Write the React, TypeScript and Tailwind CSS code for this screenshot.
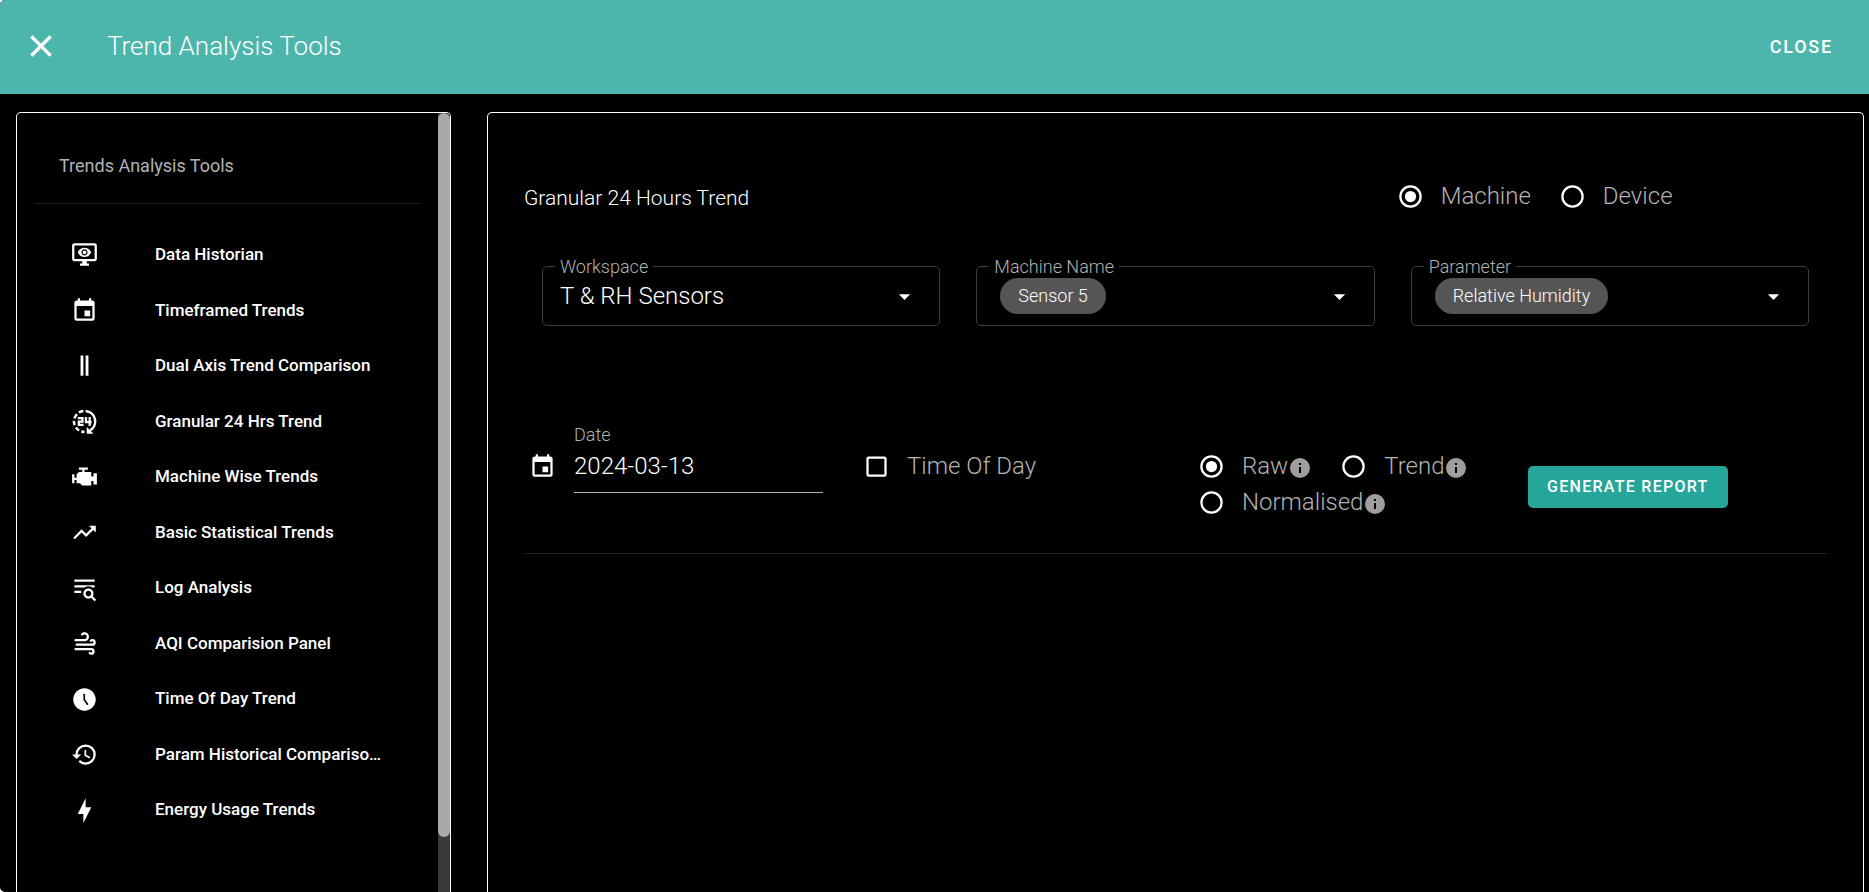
import { useState } from "react";
import type { ReactNode } from "react";

const CALENDAR =
  "M19,19H5V8H19M16,1V3H8V1H6V3H5C3.89,3 3,3.89 3,5V19A2,2 0 0,0 5,21H19A2,2 0 0,0 21,19V5C21,3.89 20.1,3 19,3H18V1M17,12H12V17H17V12Z";
const CLOSE =
  "M19,6.41L17.59,5L12,10.59L6.41,5L5,6.41L10.59,12L5,17.59L6.41,19L12,13.41L17.59,19L19,17.59L13.41,12L19,6.41Z";
const INFO =
  "M13,9H11V7H13M13,17H11V11H13M12,2A10,10 0 0,0 2,12A10,10 0 0,0 12,22A10,10 0 0,0 22,12A10,10 0 0,0 12,2Z";
const MONITOR_EYE =
  "M3 4V16H21V4H3M3 2H21C22.1 2 23 2.89 23 4V16C23 16.53 22.79 17.04 22.41 17.41C22.04 17.79 21.53 18 21 18H14V20H16V22H8V20H10V18H3C2.47 18 1.96 17.79 1.59 17.41C1.21 17.04 1 16.53 1 16V4C1 2.89 1.89 2 3 2M10.84 8.93C11.15 8.63 11.57 8.45 12 8.45C12.43 8.46 12.85 8.63 13.16 8.94C13.46 9.24 13.64 9.66 13.64 10.09C13.64 10.53 13.46 10.94 13.16 11.25C12.85 11.56 12.43 11.73 12 11.73C11.57 11.73 11.15 11.55 10.84 11.25C10.54 10.94 10.36 10.53 10.36 10.09C10.36 9.66 10.54 9.24 10.84 8.93M10.07 12C10.58 12.53 11.28 12.82 12 12.82C12.72 12.82 13.42 12.53 13.93 12C14.44 11.5 14.73 10.81 14.73 10.09C14.73 9.37 14.44 8.67 13.93 8.16C13.42 7.65 12.72 7.36 12 7.36C11.28 7.36 10.58 7.65 10.07 8.16C9.56 8.67 9.27 9.37 9.27 10.09C9.27 10.81 9.56 11.5 10.07 12M6 10.09C6.94 7.7 9.27 6 12 6C14.73 6 17.06 7.7 18 10.09C17.06 12.5 14.73 14.18 12 14.18C9.27 14.18 6.94 12.5 6 10.09Z";
const ENGINE =
  "M7,4V6H10V8H7L5,10V13H3V10H1V18H3V15H5V18H8L10,20H18V16H20V19H23V9H20V12H18V8H12V6H15V4H7Z";
const TRENDING_UP =
  "M16,6L18.29,8.29L13.41,13.17L9.41,9.17L2,16.59L3.41,18L9.41,12L13.41,16L19.71,9.71L22,12V6H16Z";
const TEXT_SEARCH =
  "M19.31 18.9L22.39 22L21 23.39L17.88 20.32C17.19 20.75 16.37 21 15.5 21C13 21 11 19 11 16.5C11 14 13 12 15.5 12C18 12 20 14 20 16.5C20 17.38 19.75 18.21 19.31 18.9M15.5 19C16.88 19 18 17.88 18 16.5C18 15.12 16.88 14 15.5 14C14.12 14 13 15.12 13 16.5C13 17.88 14.12 19 15.5 19M21 4V6H3V4H21M3 16V14H9V16H3M3 11V9H21V11H18.97C17.96 10.37 16.77 10 15.5 10C14.23 10 13.04 10.37 12.03 11H3Z";
const WINDY =
  "M4,10A1,1 0 0,1 3,9A1,1 0 0,1 4,8H12A2,2 0 0,0 14,6A2,2 0 0,0 12,4C11.45,4 10.95,4.22 10.59,4.59C10.2,5 9.56,5 9.17,4.59C8.78,4.2 8.78,3.56 9.17,3.17C9.9,2.45 10.9,2 12,2A4,4 0 0,1 16,6A4,4 0 0,1 12,10H4M19,12A1,1 0 0,0 20,11A1,1 0 0,0 19,10C18.72,10 18.47,10.11 18.29,10.29C17.9,10.68 17.27,10.68 16.88,10.29C16.5,9.9 16.5,9.27 16.88,8.88C17.42,8.34 18.17,8 19,8A3,3 0 0,1 22,11A3,3 0 0,1 19,14H5A1,1 0 0,1 4,13A1,1 0 0,1 5,12H19M18,18H4A1,1 0 0,1 3,17A1,1 0 0,1 4,16H18A3,3 0 0,1 21,19A3,3 0 0,1 18,22C17.17,22 16.42,21.66 15.88,21.12C15.5,20.73 15.5,20.1 15.88,19.71C16.27,19.32 16.9,19.32 17.29,19.71C17.47,19.89 17.72,20 18,20A1,1 0 0,0 19,19A1,1 0 0,0 18,18Z";
const CLOCK_FIVE =
  "M12 2C6.5 2 2 6.5 2 12C2 17.5 6.5 22 12 22S22 17.5 22 12S17.5 2 12 2M14.3 17.1L11 12.3V7H12.5V11.8L15.5 16.3L14.3 17.1Z";
const HISTORY =
  "M13.5,8H12V13L16.28,15.54L17,14.33L13.5,12.25V8M13,3A9,9 0 0,0 4,12H1L4.96,16.03L9,12H6A7,7 0 0,1 13,5A7,7 0 0,1 20,12A7,7 0 0,1 13,19C11.07,19 9.32,18.21 8.06,16.94L6.64,18.36C8.27,20 10.5,21 13,21A9,9 0 0,0 22,12A9,9 0 0,0 13,3";
const BOLT = "M11 15H6L13 1V9H18L11 23V15Z";
const DOUBLE_BAR = "M8.5 3H11V21H8.5V3M13 3H15.5V21H13V3Z";
const RING =
  "M12,20A8,8 0 0,1 4,12A8,8 0 0,1 12,4A8,8 0 0,1 20,12A8,8 0 0,1 12,20M12,2A10,10 0 0,0 2,12A10,10 0 0,0 12,22A10,10 0 0,0 22,12A10,10 0 0,0 12,2Z";
const DOT = "M12,7A5,5 0 0,0 7,12A5,5 0 0,0 12,17A5,5 0 0,0 17,12A5,5 0 0,0 12,7Z";
const BOX =
  "M19,3H5C3.89,3 3,3.89 3,5V19A2,2 0 0,0 5,21H19A2,2 0 0,0 21,19V5C21,3.89 20.1,3 19,3M19,5V19H5V5H19Z";
const TICK = "M10,17L5,12L6.41,10.58L10,14.17L17.59,6.58L19,8L10,17Z";

function Icon({ path, className = "size-[27px]" }: { path: string; className?: string }) {
  return (
    <svg viewBox="0 0 24 24" className={`shrink-0 fill-current ${className}`} aria-hidden="true">
      <path d={path} fillRule="evenodd" />
    </svg>
  );
}

function Hours24Icon() {
  return (
    <svg viewBox="0 0 24 24" className="size-[27px] shrink-0" fill="none" stroke="currentColor" strokeWidth="2" aria-hidden="true">
      <path d="M13 2.6A9.4 9.4 0 0 1 17 20" strokeWidth="2.2" />
      <path
        d="M11 2.6A9.4 9.4 0 0 0 7 4M5.4 5.4A9.4 9.4 0 0 0 3 9.2M2.6 11.4A9.4 9.4 0 0 0 3.2 15.2M4.4 17.4A9.4 9.4 0 0 0 7.2 20M9.2 20.9A9.4 9.4 0 0 0 12 21.4"
        strokeWidth="2.2"
      />
      <path d="M14 16.8V22.8H20Z" fill="currentColor" stroke="none" />
      <path d="M6 9H10.2V12H7V15H11.2" />
      <path d="M13.3 8V12.6H18.4M16.6 8V16" />
    </svg>
  );
}

const tools: { label: string; icon: ReactNode }[] = [
  { label: "Data Historian", icon: <Icon path={MONITOR_EYE} /> },
  { label: "Timeframed Trends", icon: <Icon path={CALENDAR} /> },
  { label: "Dual Axis Trend Comparison", icon: <Icon path={DOUBLE_BAR} /> },
  { label: "Granular 24 Hrs Trend", icon: <Hours24Icon /> },
  { label: "Machine Wise Trends", icon: <Icon path={ENGINE} /> },
  { label: "Basic Statistical Trends", icon: <Icon path={TRENDING_UP} /> },
  { label: "Log Analysis", icon: <Icon path={TEXT_SEARCH} /> },
  { label: "AQI Comparision Panel", icon: <Icon path={WINDY} /> },
  { label: "Time Of Day Trend", icon: <Icon path={CLOCK_FIVE} /> },
  { label: "Param Historical Compariso…", icon: <Icon path={HISTORY} /> },
  { label: "Energy Usage Trends", icon: <Icon path={BOLT} /> },
];

function Sidebar() {
  return (
    <aside className="flex w-[435px] shrink-0 overflow-hidden rounded-t-[5px] border border-b-0 border-white">
      <nav className="min-w-0 flex-1 px-[18px] pt-[18px]" aria-label="Trends Analysis Tools">
        <h2 className="flex h-[73px] items-center border-b border-[#1f1f1f] pb-1 pl-6 text-[18px] font-normal text-[#b3b3b3]">
          Trends Analysis Tools
        </h2>
        <ul className="mt-[23px] grid h-[611px] auto-rows-fr">
          {tools.map((tool) => (
            <li key={tool.label}>
              <a href="#" className="flex h-full items-center gap-[57px] pl-9 text-[17px] font-medium whitespace-nowrap">
                {tool.icon}
                {tool.label}
              </a>
            </li>
          ))}
        </ul>
      </nav>
      <div className="w-3 shrink-0 bg-[#3a3a3a]" aria-hidden="true">
        <div className="h-[93%] rounded-full bg-[#a9a9aa]" />
      </div>
    </aside>
  );
}

function SelectField({ id, label, value, chip = false }: { id: string; label: string; value: string; chip?: boolean }) {
  return (
    <div className={`relative flex h-[60px] items-center rounded-[5px] border border-[#3d3d3d] ${chip ? "pl-[23px]" : "pl-[17px]"}`}>
      <label htmlFor={id} className="absolute -top-3 left-3 bg-black px-[5px] text-[18px] leading-6 text-[#b3b3b3]">
        {label}
      </label>
      <select
        id={id}
        defaultValue={value}
        className={
          chip
            ? "relative field-sizing-content h-9 appearance-none rounded-full bg-[#555555] px-[18px] pb-[2px] text-[18px]"
            : "field-sizing-content h-9 appearance-none bg-transparent text-[24px]"
        }
      >
        <option>{value}</option>
      </select>
      <Icon path="M7,10L12,15L17,10H7Z" className="pointer-events-none absolute right-[21px] size-[27px]" />
    </div>
  );
}

function Radio({
  name,
  label,
  checked,
  onSelect,
  info = false,
}: {
  name: string;
  label: string;
  checked: boolean;
  onSelect: () => void;
  info?: boolean;
}) {
  return (
    <label className="flex h-9 items-center text-[24px] text-[#b3b3b3]">
      <span className="mr-[17px] grid text-white">
        <input
          type="radio"
          name={name}
          checked={checked}
          onChange={onSelect}
          className="peer col-start-1 row-start-1 size-[27px] appearance-none rounded-full"
        />
        <Icon path={RING} className="pointer-events-none col-start-1 row-start-1 size-[27px]" />
        <Icon path={DOT} className="pointer-events-none invisible col-start-1 row-start-1 size-[27px] peer-checked:visible" />
      </span>
      {label}
      {info && <Icon path={INFO} className="mt-1 size-6 text-[#9e9e9e]" />}
    </label>
  );
}

export default function App() {
  const [source, setSource] = useState("Machine");
  const [mode, setMode] = useState("Raw");

  return (
    <div className="h-screen bg-white font-['Roboto',sans-serif]">
      <div className="flex h-full flex-col overflow-hidden rounded-l-[5px] bg-black font-light text-white">
        <header className="flex h-[94px] shrink-0 items-center bg-[#4db6ac] pr-9 pb-[2px] pl-[23px]">
          <button type="button" aria-label="Dismiss">
            <Icon path={CLOSE} className="size-9 stroke-current stroke-[0.4]" />
          </button>
          <h1 className="ml-12 flex-1 text-[26px]">Trend Analysis Tools</h1>
          <button type="button" className="text-[18px] font-medium tracking-[0.1em]">
            CLOSE
          </button>
        </header>

        <div className="flex min-h-0 flex-1 gap-9 pt-[18px] pr-[5px] pl-4">
          <Sidebar />

          <main className="min-w-0 flex-1 rounded-t-[5px] border border-b-0 border-white px-9 pt-[65px]">
            <div className="grid grid-cols-[2fr_1fr] items-center">
              <h2 className="pt-1 text-[21px] leading-7">Granular 24 Hours Trend</h2>
              <div className="flex gap-7 pl-1" role="radiogroup" aria-label="Source">
                {["Machine", "Device"].map((item) => (
                  <Radio key={item} name="source" label={item} checked={source === item} onSelect={() => setSource(item)} />
                ))}
              </div>
            </div>

            <div className="mt-[52px] grid grid-cols-3 gap-9 px-[18px]">
              <SelectField id="workspace" label="Workspace" value="T & RH Sensors" />
              <SelectField id="machine" label="Machine Name" value="Sensor 5" chip />
              <SelectField id="parameter" label="Parameter" value="Relative Humidity" chip />
            </div>

            <div className="mt-[97px] grid grid-cols-[339fr_335fr_330fr_299fr] border-b border-[#1f1f1f] pb-[33px]">
              <div className="flex pr-10 pl-[5px]">
                <Icon path={CALENDAR} className="mt-[30px] size-[27px]" />
                <div className="ml-[18px] min-w-0 flex-1">
                  <label htmlFor="date" className="block h-6 text-[18px] leading-6 text-[#b3b3b3]">
                    Date
                  </label>
                  <input
                    id="date"
                    type="text"
                    defaultValue="2024-03-13"
                    className="h-[46px] w-full border-b border-[#b3b3b3] bg-transparent pb-2 text-[24px] outline-none"
                  />
                </div>
              </div>

              <label className="mt-[25px] flex h-9 items-center text-[24px] text-[#b3b3b3]">
                <span className="mr-[17px] grid text-white">
                  <input type="checkbox" className="peer col-start-1 row-start-1 size-[27px] appearance-none" />
                  <Icon path={BOX} className="pointer-events-none col-start-1 row-start-1 size-[27px]" />
                  <Icon path={TICK} className="pointer-events-none invisible col-start-1 row-start-1 size-[27px] peer-checked:visible" />
                </span>
                Time Of Day
              </label>

              <div className="mt-[25px] flex flex-wrap content-start gap-x-7" role="radiogroup" aria-label="Mode">
                {["Raw", "Trend", "Normalised"].map((item) => (
                  <Radio key={item} name="mode" label={item} checked={mode === item} onSelect={() => setMode(item)} info />
                ))}
              </div>

              <div className="pt-[43px]">
                <button
                  type="button"
                  className="h-[42px] rounded-[5px] bg-[#26a69a] px-[19px] text-[16px] font-medium tracking-[0.08em] whitespace-nowrap"
                >
                  GENERATE REPORT
                </button>
              </div>
            </div>
          </main>
        </div>
      </div>
    </div>
  );
}
